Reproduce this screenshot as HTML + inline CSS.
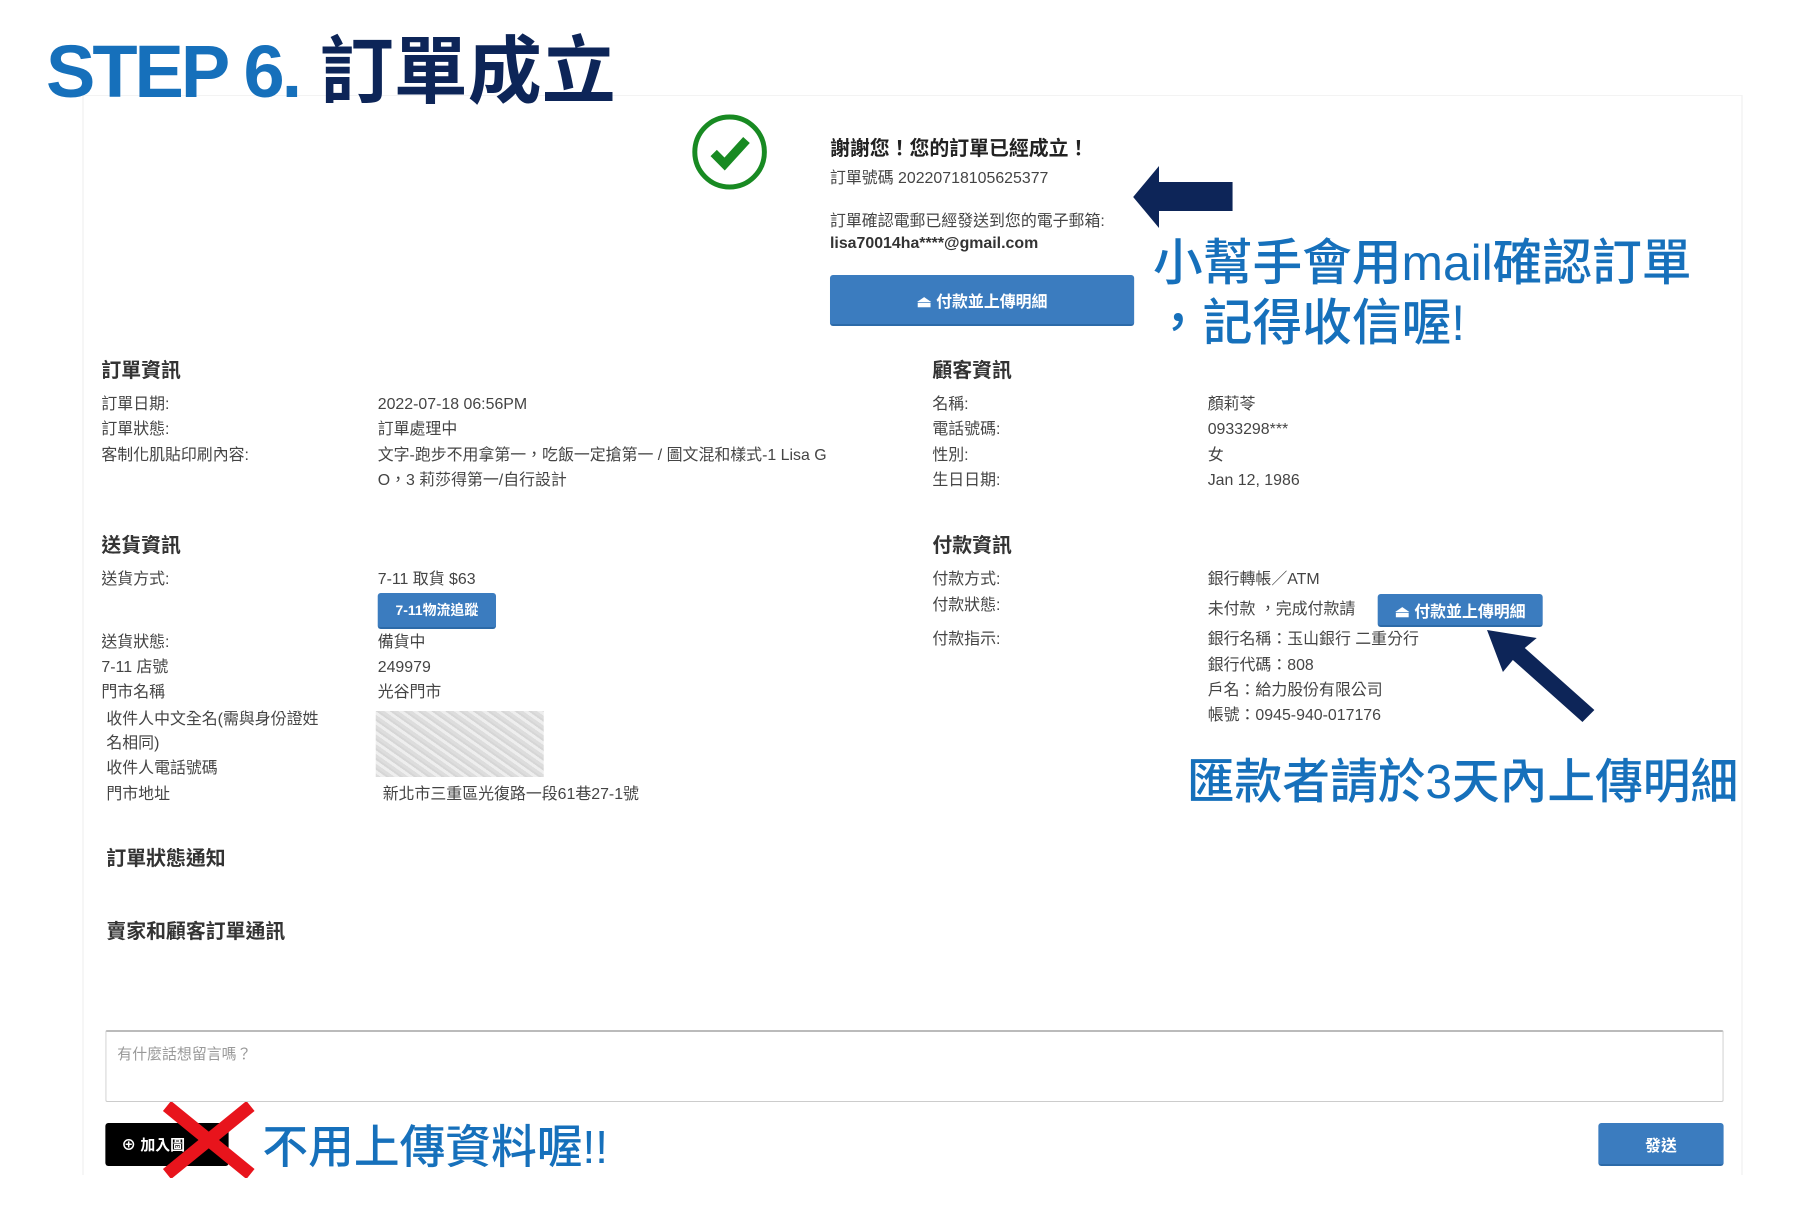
<!DOCTYPE html>
<html><head><meta charset="utf-8">
<style>
*{margin:0;padding:0;box-sizing:border-box}
body{width:1797px;height:1209px;background:#fff;position:relative;overflow:hidden;font-family:"Liberation Sans","Noto Sans CJK TC",sans-serif;color:#333}
.a{position:absolute;white-space:nowrap}
.t{font-size:16px;line-height:20px;color:#444}
.h{font-size:20px;font-weight:bold;color:#333}
.btn{position:absolute;background:#3b7cbf;color:#fff;border-radius:3px;font-weight:bold;display:flex;align-items:center;justify-content:center;border-bottom:2px solid #2c6aa8}
.blue{color:#1670bb;font-family:"Liberation Sans","Noto Sans CJK TC",sans-serif;font-weight:500}
#w{position:absolute;left:0;top:0;width:1797px;height:1209px;transform:translate(0,-6px) scale(0.994,1);transform-origin:0 0}
</style></head><body>
<div id="w">
<div class="a" style="left:83px;top:101px;width:1670px;height:1080px;border-left:1px solid #eee;border-right:1px solid #eee;border-top:1px solid #f3f3f3"></div>

<svg class="a" style="left:694px;top:118px" width="80" height="80" viewBox="0 0 80 80"><circle cx="40" cy="40" r="35" fill="none" stroke="#188a22" stroke-width="5"/><path d="M24 41 L35 52 L57 28" fill="none" stroke="#188a22" stroke-width="9"/></svg>

<div class="a" style="left:835px;top:138px;font-size:20px;font-weight:bold;color:#222">謝謝您！您的訂單已經成立！</div>
<div class="a t" style="left:835px;top:175px">訂單號碼 20220718105625377</div>
<div class="a t" style="left:835px;top:218px">訂單確認電郵已經發送到您的電子郵箱:</div>
<div class="a t" style="left:835px;top:240px;font-weight:bold;color:#333">lisa70014ha****@gmail.com</div>
<div class="btn" style="left:835px;top:281px;width:306px;height:51px;font-size:16px">⏏ 付款並上傳明細</div>

<svg class="a" style="left:1138px;top:170px" width="104" height="66"><polygon points="2,33 28,2 28,18 102,18 102,47 28,47 28,64" fill="#0d2558"/></svg>
<div class="a blue" style="left:1160px;top:238px;font-size:50px;line-height:62px">小幫手會用mail確認訂單</div>
<div class="a blue" style="left:1160px;top:298px;font-size:50px;line-height:62px">，記得收信喔!</div>

<div class="a h" style="left:102px;top:360px">訂單資訊</div>
<div class="a t" style="left:102px;top:401px">訂單日期:</div><div class="a t" style="left:380px;top:401px">2022-07-18 06:56PM</div>
<div class="a t" style="left:102px;top:426px">訂單狀態:</div><div class="a t" style="left:380px;top:426px">訂單處理中</div>
<div class="a t" style="left:102px;top:452px">客制化肌貼印刷內容:</div><div class="a t" style="left:380px;top:452px">文字-跑步不用拿第一，吃飯一定搶第一 / 圖文混和樣式-1 Lisa G</div>
<div class="a t" style="left:380px;top:477px">O，3 莉莎得第一/自行設計</div>

<div class="a h" style="left:938px;top:360px">顧客資訊</div>
<div class="a t" style="left:938px;top:401px">名稱:</div><div class="a t" style="left:1215px;top:401px">顏莉苓</div>
<div class="a t" style="left:938px;top:426px">電話號碼:</div><div class="a t" style="left:1215px;top:426px">0933298***</div>
<div class="a t" style="left:938px;top:452px">性別:</div><div class="a t" style="left:1215px;top:452px">女</div>
<div class="a t" style="left:938px;top:477px">生日日期:</div><div class="a t" style="left:1215px;top:477px">Jan 12, 1986</div>

<div class="a h" style="left:102px;top:535px">送貨資訊</div>
<div class="a t" style="left:102px;top:576px">送貨方式:</div><div class="a t" style="left:380px;top:576px">7-11 取貨 $63</div>
<div class="btn" style="left:380px;top:599px;width:119px;height:36px;font-size:14px">7-11物流追蹤</div>
<div class="a t" style="left:102px;top:639px">送貨狀態:</div><div class="a t" style="left:380px;top:639px">備貨中</div>
<div class="a t" style="left:102px;top:664px">7-11 店號</div><div class="a t" style="left:380px;top:664px">249979</div>
<div class="a t" style="left:102px;top:689px">門市名稱</div><div class="a t" style="left:380px;top:689px">光谷門市</div>
<div class="a t" style="left:107px;top:716px">收件人中文全名(需與身份證姓</div>
<div class="a t" style="left:107px;top:740px">名相同)</div>
<div class="a t" style="left:107px;top:765px">收件人電話號碼</div>
<div class="a t" style="left:107px;top:791px">門市地址</div><div class="a t" style="left:385px;top:791px">新北市三重區光復路一段61巷27-1號</div>
<div class="a" style="left:378px;top:717px;width:169px;height:66px;background:repeating-linear-gradient(35deg,#ddd 0 3px,#eee 3px 6px,#d6d6d6 6px 8px)"></div>

<div class="a h" style="left:938px;top:535px">付款資訊</div>
<div class="a t" style="left:938px;top:576px">付款方式:</div><div class="a t" style="left:1215px;top:576px">銀行轉帳／ATM</div>
<div class="a t" style="left:938px;top:602px">付款狀態:</div><div class="a t" style="left:1215px;top:606px">未付款 ，完成付款請</div>
<div class="btn" style="left:1386px;top:600px;width:166px;height:33px;font-size:16px">⏏ 付款並上傳明細</div>
<div class="a t" style="left:938px;top:636px">付款指示:</div>
<div class="a t" style="left:1215px;top:636px">銀行名稱：玉山銀行 二重分行</div>
<div class="a t" style="left:1215px;top:662px">銀行代碼：808</div>
<div class="a t" style="left:1215px;top:687px">戶名：給力股份有限公司</div>
<div class="a t" style="left:1215px;top:712px">帳號：0945-940-017176</div>

<svg class="a" style="left:1490px;top:630px" width="120" height="100"><polygon points="6,6 56,14 44,24 114,86 102,98 32,36 22,48" fill="#0d2558"/></svg>
<div class="a blue" style="left:1194px;top:758px;font-size:48px;line-height:62px">匯款者請於3天內上傳明細</div>

<div class="a h" style="left:107px;top:848px">訂單狀態通知</div>
<div class="a h" style="left:107px;top:921px">賣家和顧客訂單通訊</div>

<div class="a" style="left:106px;top:1036px;width:1628px;height:72px;border:1px solid #ccc;border-top:2px solid #bbb;border-radius:2px"></div>
<div class="a" style="left:118px;top:1049px;font-size:15px;color:#999">有什麼話想留言嗎？</div>

<div class="btn" style="left:106px;top:1129px;width:124px;height:43px;background:#000;border:none;border-radius:3px;font-size:15px;justify-content:flex-start;padding-left:16px">⊕ 加入圖</div>
<svg class="a" style="left:162px;top:1108px" width="96" height="76"><path d="M6 4 L90 72 M90 4 L6 72" stroke="#e8141c" stroke-width="13"/></svg>
<div class="a blue" style="left:264px;top:1124px;font-size:46px;line-height:58px">不用上傳資料喔!!</div>

<div class="btn" style="left:1608px;top:1129px;width:126px;height:43px;font-size:16px">發送</div>
</div>

<div class="a" style="left:46px;top:24px;font-size:74px;font-weight:bold;line-height:96px"><span style="color:#1670bb;letter-spacing:-3px">STEP 6.</span> <span style="color:#0d2558">訂單成立</span></div>
</body></html>
